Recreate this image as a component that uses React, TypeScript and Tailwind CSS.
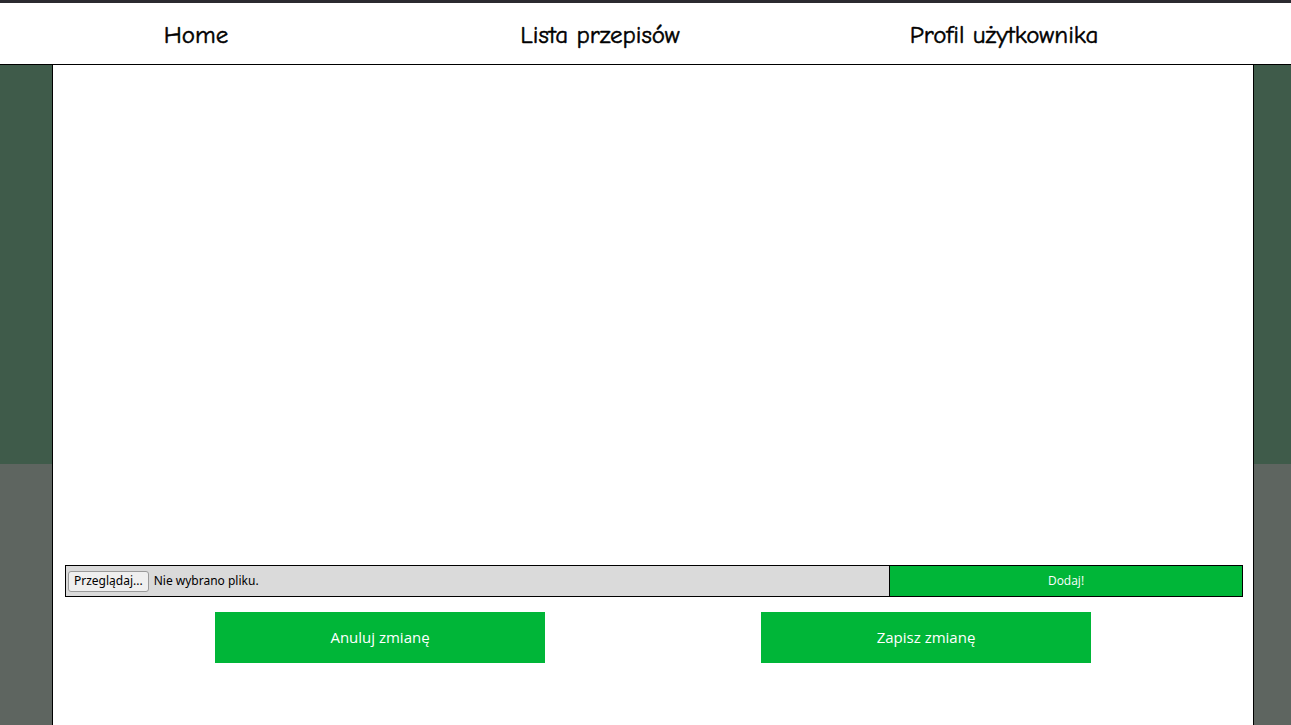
export default function App() {
  const navFont = { fontFamily: '"Comic Sans MS", "Comic Neue", "Open Sans", sans-serif' };
  return (
    <div className="min-h-screen w-full bg-[linear-gradient(#3f5b4a_0,#3f5b4a_464px,#5e6560_464px)] flex flex-col">
      <div className="h-[3px] bg-[#2b2a30]" />
      <nav className="h-[62px] bg-white border-b border-black flex items-center overflow-hidden">
        <div className="flex -ml-[6px] text-[25px] text-black pt-[3px] [-webkit-text-stroke:0.5px_black]" style={navFont}>
          <a className="w-[404px] text-center">Home</a>
          <a className="w-[404px] text-center">Lista przepisów</a>
          <a className="w-[404px] text-center">Profil użytkownika</a>
        </div>
      </nav>
      <main className="ml-[52px] w-[1202px] flex-1 bg-white border-x border-black flex flex-col min-h-[660px]">
        <div className="h-[500px]" />
        <div className="ml-[12px] mr-[10px] h-[32px] border border-black bg-[#dadada] flex">
          <div className="flex-1 flex items-center pl-[2px] text-[12px] text-black font-['Noto_Sans',sans-serif]">
            <span className="h-[21px] px-[5px] flex items-center border border-[#9a9a9a] rounded-[3px] bg-[#efefef] mr-[5px]">Przeglądaj...</span>
            <span>Nie wybrano pliku.</span>
          </div>
          <div className="w-[353px] border-l border-black bg-[#00b638] text-white text-[12px] flex items-center justify-center font-['Open_Sans',sans-serif]">
            Dodaj!
          </div>
        </div>
        <div className="flex mt-[15px] pl-[162px] gap-[216px] font-['Open_Sans',sans-serif] text-[15px] text-white">
          <button className="w-[330px] h-[51px] bg-[#00b638] flex items-center justify-center">Anuluj zmianę</button>
          <button className="w-[330px] h-[51px] bg-[#00b638] flex items-center justify-center">Zapisz zmianę</button>
        </div>
      </main>
    </div>
  );
}
